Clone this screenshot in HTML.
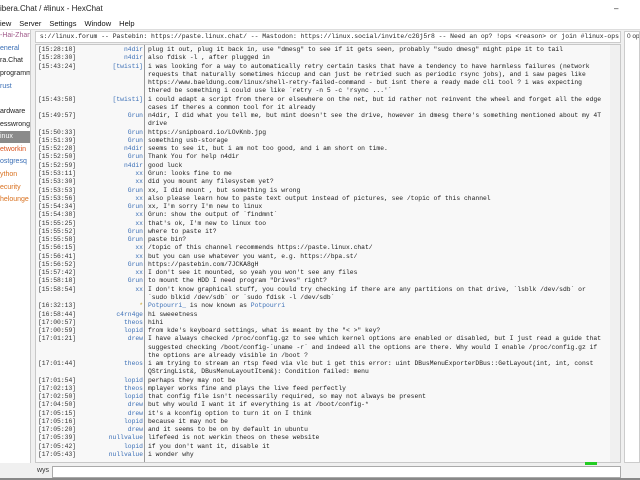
<!DOCTYPE html>
<html><head><meta charset="utf-8"><style>
*{margin:0;padding:0;box-sizing:border-box}
body{width:640px;height:480px;overflow:hidden;background:#f0f0f0;font-family:"Liberation Sans",sans-serif;position:relative}
.title{position:absolute;left:0;top:0;width:640px;height:17px;background:#fff;font-size:8px;line-height:17px;color:#222}
.menu{position:absolute;left:0;top:17px;width:640px;height:13px;background:#fff;font-size:7.5px;line-height:13px;color:#111;border-bottom:1px solid #ddd}
.menu span{margin-right:8px}
.side{position:absolute;left:0;top:30px;width:31px;height:433px;background:#fff;border-right:1px solid #ccc;font-size:7px;overflow:hidden}
.side div{position:absolute;left:0;width:31px;height:12px;line-height:12px;white-space:nowrap;overflow:hidden}
.topic{position:absolute;left:35px;top:31px;width:586px;height:12px;background:#fff;border:1px solid #ccc;font-family:"Liberation Mono",monospace;font-size:6.4px;line-height:10px;color:#222;white-space:pre;overflow:hidden}
.chat{position:absolute;left:35px;top:44px;width:586px;height:419px;background:#f8f8f8;border:1px solid #c8c8c8;overflow:hidden;padding-top:1px}
.sep{position:absolute;left:108px;top:0;width:1px;height:419px;background:#999}
.sb{position:absolute;right:0;top:0;width:10px;height:417px;background:#f0f0f0}
.r{position:relative;display:block;width:586px;height:8.27px;font-family:"Liberation Mono",monospace;font-size:6.35px;line-height:8.27px;white-space:pre;color:#1a1a1a}
.t{position:absolute;left:2px;top:0;color:#333}
.n{position:absolute;right:479px;top:0;color:#3b6fb6;text-align:right}
.m{position:absolute;left:112px;top:0}
.ul{position:absolute;left:624px;top:31px;width:16px;height:432px;background:#fff;border:1px solid #ccc;font-size:6.5px;color:#333;overflow:hidden;white-space:nowrap}
.input{position:absolute;left:52px;top:466px;width:569px;height:12px;background:#fff;border:1px solid #aaa}
.bot{position:absolute;left:0;top:478px;width:640px;height:2px;background:#888}
</style></head><body>
<div class="title">ibera.Chat / #linux - HexChat<span style="position:absolute;left:614px;top:0">–</span></div>
<div class="menu"><span>iew</span><span>Server</span><span>Settings</span><span>Window</span><span>Help</span></div>
<div class="side">
<div style="top:0;color:#a05a8a">-Hai-Zhan</div>
<div style="top:13px;color:#3b6fb6">eneral</div>
<div style="top:25px;color:#222">ra.Chat</div>
<div style="top:38px;color:#222">programm</div>
<div style="top:51px;color:#3b6fb6">rust</div>
<div style="top:76px;color:#222">ardware</div>
<div style="top:89px;color:#222">esswrong</div>
<div style="top:101px;background:#8a8a8a;color:#fff">inux</div>
<div style="top:114px;color:#d9531e">etworkin</div>
<div style="top:126px;color:#3b6fb6">ostgresq</div>
<div style="top:139px;color:#d9701e">ython</div>
<div style="top:152px;color:#d9701e">ecurity</div>
<div style="top:164px;color:#d9701e">helounge</div>
</div>
<div class="topic"> s://linux.forum -- Pastebin: https://paste.linux.chat/ -- Mastodon: https://linux.social/invite/c2Gj5r8 -- Need an op? !ops &lt;reason&gt; or join #linux-ops</div>
<div class="ul"><div style="padding:1px 2px">0 op</div></div>
<div class="chat"><div class="sep"></div><div class="sb"></div>
<div class="r"><span class="t">[15:28:18]</span><span class="n">n4dir</span><span class="m">plug it out, plug it back in, use "dmesg" to see if it gets seen, probably "sudo dmesg" might pipe it to tail</span></div>
<div class="r"><span class="t">[15:28:30]</span><span class="n">n4dir</span><span class="m">also fdisk -l , after plugged in</span></div>
<div class="r"><span class="t">[15:43:24]</span><span class="n">[twisti]</span><span class="m">i was looking for a way to automatically retry certain tasks that have a tendency to have harmless failures (network</span></div>
<div class="r"><span class="m">requests that naturally sometimes hiccup and can just be retried such as periodic rsync jobs), and i saw pages like</span></div>
<div class="r"><span class="m">https://www.baeldung.com/linux/shell-retry-failed-command - but isnt there a ready made cli tool ? i was expecting</span></div>
<div class="r"><span class="m">thered be something i could use like `retry -n 5 -c 'rsync ...'`</span></div>
<div class="r"><span class="t">[15:43:58]</span><span class="n">[twisti]</span><span class="m">i could adapt a script from there or elsewhere on the net, but id rather not reinvent the wheel and forget all the edge</span></div>
<div class="r"><span class="m">cases if theres a common tool for it already</span></div>
<div class="r"><span class="t">[15:49:57]</span><span class="n">Grun</span><span class="m">n4dir, I did what you tell me, but mint doesn't see the drive, however in dmesg there's something mentioned about my 4T</span></div>
<div class="r"><span class="m">drive</span></div>
<div class="r"><span class="t">[15:50:33]</span><span class="n">Grun</span><span class="m">https://snipboard.io/LOvKnb.jpg</span></div>
<div class="r"><span class="t">[15:51:39]</span><span class="n">Grun</span><span class="m">something usb-storage</span></div>
<div class="r"><span class="t">[15:52:28]</span><span class="n">n4dir</span><span class="m">seems to see it, but i am not too good, and i am short on time.</span></div>
<div class="r"><span class="t">[15:52:50]</span><span class="n">Grun</span><span class="m">Thank You for help n4dir</span></div>
<div class="r"><span class="t">[15:52:59]</span><span class="n">n4dir</span><span class="m">good luck</span></div>
<div class="r"><span class="t">[15:53:11]</span><span class="n">xx</span><span class="m">Grun: looks fine to me</span></div>
<div class="r"><span class="t">[15:53:30]</span><span class="n">xx</span><span class="m">did you mount any filesystem yet?</span></div>
<div class="r"><span class="t">[15:53:53]</span><span class="n">Grun</span><span class="m">xx, I did mount , but something is wrong</span></div>
<div class="r"><span class="t">[15:53:56]</span><span class="n">xx</span><span class="m">also please learn how to paste text output instead of pictures, see /topic of this channel</span></div>
<div class="r"><span class="t">[15:54:34]</span><span class="n">Grun</span><span class="m">xx, I'm sorry I'm new to linux</span></div>
<div class="r"><span class="t">[15:54:38]</span><span class="n">xx</span><span class="m">Grun: show the output of `findmnt`</span></div>
<div class="r"><span class="t">[15:55:25]</span><span class="n">xx</span><span class="m">that's ok, I'm new to linux too</span></div>
<div class="r"><span class="t">[15:55:52]</span><span class="n">Grun</span><span class="m">where to paste it?</span></div>
<div class="r"><span class="t">[15:55:58]</span><span class="n">Grun</span><span class="m">paste bin?</span></div>
<div class="r"><span class="t">[15:56:15]</span><span class="n">xx</span><span class="m">/topic of this channel recommends https://paste.linux.chat/</span></div>
<div class="r"><span class="t">[15:56:41]</span><span class="n">xx</span><span class="m">but you can use whatever you want, e.g. https://bpa.st/</span></div>
<div class="r"><span class="t">[15:56:52]</span><span class="n">Grun</span><span class="m">https://pastebin.com/7JCKA8gH</span></div>
<div class="r"><span class="t">[15:57:42]</span><span class="n">xx</span><span class="m">I don't see it mounted, so yeah you won't see any files</span></div>
<div class="r"><span class="t">[15:58:18]</span><span class="n">Grun</span><span class="m">to mount the HDD I need program "Drives" right?</span></div>
<div class="r"><span class="t">[15:58:54]</span><span class="n">xx</span><span class="m">I don't know graphical stuff, you could try checking if there are any partitions on that drive, `lsblk /dev/sdb` or</span></div>
<div class="r"><span class="m">`sudo blkid /dev/sdb` or `sudo fdisk -l /dev/sdb`</span></div>
<div class="r"><span class="t">[16:32:13]</span><span class="n" style="color:#c8a020">*</span><span class="m"><span style="color:#3b6fb6">Potpourri_</span> is now known as <span style="color:#3b6fb6">Potpourri</span></span></div>
<div class="r"><span class="t">[16:58:44]</span><span class="n">c4rn4ge</span><span class="m">hi sweeetness</span></div>
<div class="r"><span class="t">[17:00:57]</span><span class="n">theos</span><span class="m">hihi</span></div>
<div class="r"><span class="t">[17:00:59]</span><span class="n">lopid</span><span class="m">from kde's keyboard settings, what is meant by the "&lt; &gt;" key?</span></div>
<div class="r"><span class="t">[17:01:21]</span><span class="n">drew</span><span class="m">I have always checked /proc/config.gz to see which kernel options are enabled or disabled, but I just read a guide that</span></div>
<div class="r"><span class="m">suggested checking /boot/config-`uname -r` and indeed all the options are there. Why would I enable /proc/config.gz if</span></div>
<div class="r"><span class="m">the options are already visible in /boot ?</span></div>
<div class="r"><span class="t">[17:01:44]</span><span class="n">theos</span><span class="m">i am trying to stream an rtsp feed via vlc but i get this error: uint DBusMenuExporterDBus::GetLayout(int, int, const</span></div>
<div class="r"><span class="m">QStringList&amp;, DBusMenuLayoutItem&amp;): Condition failed: menu</span></div>
<div class="r"><span class="t">[17:01:54]</span><span class="n">lopid</span><span class="m">perhaps they may not be</span></div>
<div class="r"><span class="t">[17:02:13]</span><span class="n">theos</span><span class="m">mplayer works fine and plays the live feed perfectly</span></div>
<div class="r"><span class="t">[17:02:50]</span><span class="n">lopid</span><span class="m">that config file isn't necessarily required, so may not always be present</span></div>
<div class="r"><span class="t">[17:04:50]</span><span class="n">drew</span><span class="m">but why would I want it if everything is at /boot/config-*</span></div>
<div class="r"><span class="t">[17:05:15]</span><span class="n">drew</span><span class="m">it's a kconfig option to turn it on I think</span></div>
<div class="r"><span class="t">[17:05:16]</span><span class="n">lopid</span><span class="m">because it may not be</span></div>
<div class="r"><span class="t">[17:05:20]</span><span class="n">drew</span><span class="m">and it seems to be on by default in ubuntu</span></div>
<div class="r"><span class="t">[17:05:39]</span><span class="n">nullvalue</span><span class="m">lifefeed is not werkin theos on these website</span></div>
<div class="r"><span class="t">[17:05:42]</span><span class="n">lopid</span><span class="m">if you don't want it, disable it</span></div>
<div class="r"><span class="t">[17:05:43]</span><span class="n">nullvalue</span><span class="m">i wonder why</span></div>
</div>
<div style="position:absolute;left:37px;top:467px;font-size:7px;color:#333">wys</div>
<div class="input"></div>
<div style="position:absolute;left:585px;top:462px;width:12px;height:3px;background:#2c2"></div>
<div class="bot"></div>
</body></html>
